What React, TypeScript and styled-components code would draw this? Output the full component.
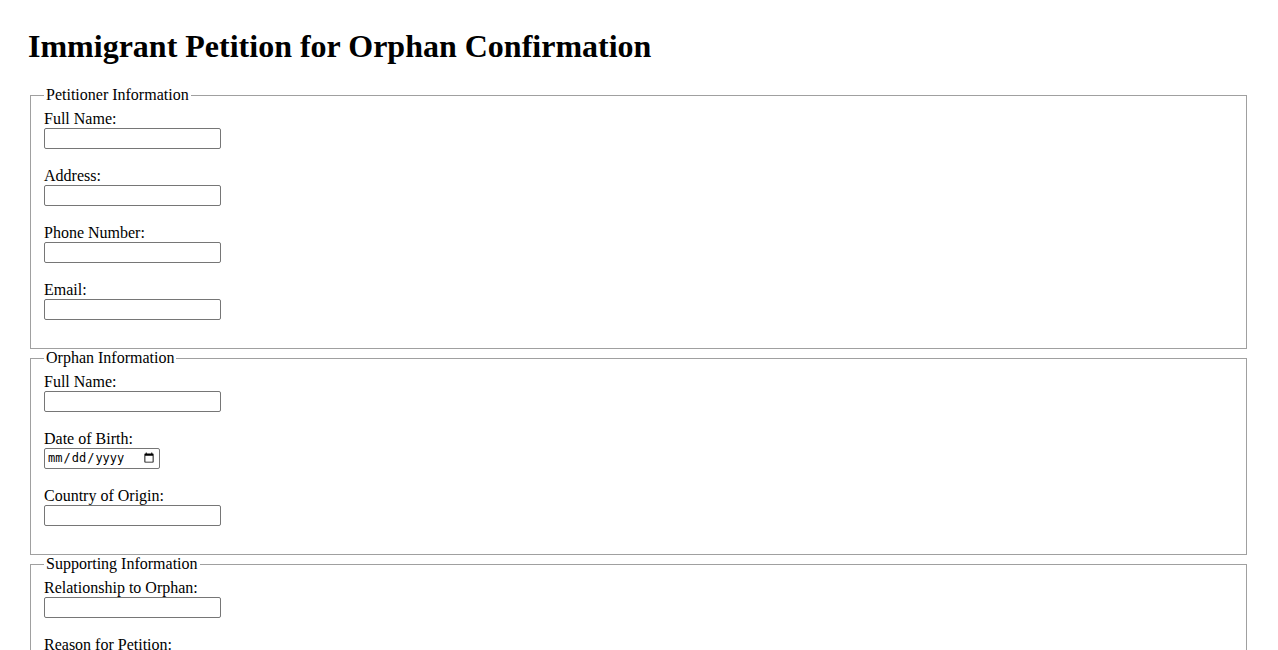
import React from "react";
import styled, { createGlobalStyle } from "styled-components";

const Global = createGlobalStyle`
  html, body { background: #fff; }
  body {
    margin: 28px 29px 28px 28px;
    font-family: "Liberation Serif", "Times New Roman", serif;
    font-size: 16px;
    color: #000;
  }
`;

const Title = styled.h1`
  font-size: 32px;
  font-weight: bold;
  margin: 0 0 21px;
  font-family: "Liberation Serif", "Times New Roman", serif;
`;

const Form = styled.form`
  display: block;
`;

const Section = styled.fieldset`
  margin: 0 2px;
  padding: 0.35em calc(0.75em + 1px) calc(0.625em + 0.6px);
  border: 1px solid #a0a0a0;
  min-width: min-content;
`;

const Legend = styled.legend`
  padding: 0 2px;
`;

const Field = styled.div`
  display: flex;
  flex-direction: column;
  align-items: flex-start;
  margin-bottom: 18px;
`;

const Label = styled.label`
  display: block;
  line-height: normal;
`;

const TextInput = styled.input`
  box-sizing: border-box;
  width: 177px;
  height: 21px;
  padding: 1px 2px;
  border: 1px solid #767676;
  border-radius: 2px;
  font-family: "Liberation Sans", Arial, sans-serif;
  font-size: 13.33px;
  background: #fff;
`;

const DateInput = styled.input`
  box-sizing: border-box;
  width: 116px;
  height: 21px;
  padding: 1px 2px;
  border: 1px solid #767676;
  border-radius: 2px;
  font-family: "DejaVu Sans Mono", monospace;
  font-size: 12px;
  background: #fff;
`;

const TextArea = styled.textarea`
  box-sizing: border-box;
  width: 177px;
  height: 36px;
  border: 1px solid #767676;
  border-radius: 2px;
  font-family: "Liberation Mono", monospace;
  font-size: 13.33px;
`;

const Submit = styled.button`
  font-family: "Liberation Sans", Arial, sans-serif;
  font-size: 13.33px;
  margin-top: 8px;
`;

type F = { id: string; label: string; type?: string };

const sections: { title: string; fields: F[] }[] = [
  {
    title: "Petitioner Information",
    fields: [
      { id: "pname", label: "Full Name:" },
      { id: "paddr", label: "Address:" },
      { id: "pphone", label: "Phone Number:", type: "tel" },
      { id: "pemail", label: "Email:", type: "email" },
    ],
  },
  {
    title: "Orphan Information",
    fields: [
      { id: "oname", label: "Full Name:" },
      { id: "odob", label: "Date of Birth:", type: "date" },
      { id: "ocountry", label: "Country of Origin:" },
    ],
  },
  {
    title: "Supporting Information",
    fields: [
      { id: "rel", label: "Relationship to Orphan:" },
      { id: "reason", label: "Reason for Petition:", type: "textarea" },
    ],
  },
];

export default function App() {
  return (
    <>
      <Global />
      <Title>Immigrant Petition for Orphan Confirmation</Title>
      <Form onSubmit={(e) => e.preventDefault()}>
        {sections.map((s) => (
          <Section key={s.title}>
            <Legend>{s.title}</Legend>
            {s.fields.map((f) => (
              <Field key={f.id}>
                <Label htmlFor={f.id}>{f.label}</Label>
                {f.type === "date" ? (
                  <DateInput id={f.id} type="date" />
                ) : f.type === "textarea" ? (
                  <TextArea id={f.id} />
                ) : (
                  <TextInput id={f.id} type={f.type || "text"} />
                )}
              </Field>
            ))}
          </Section>
        ))}
        <Submit type="submit">Submit</Submit>
      </Form>
    </>
  );
}
